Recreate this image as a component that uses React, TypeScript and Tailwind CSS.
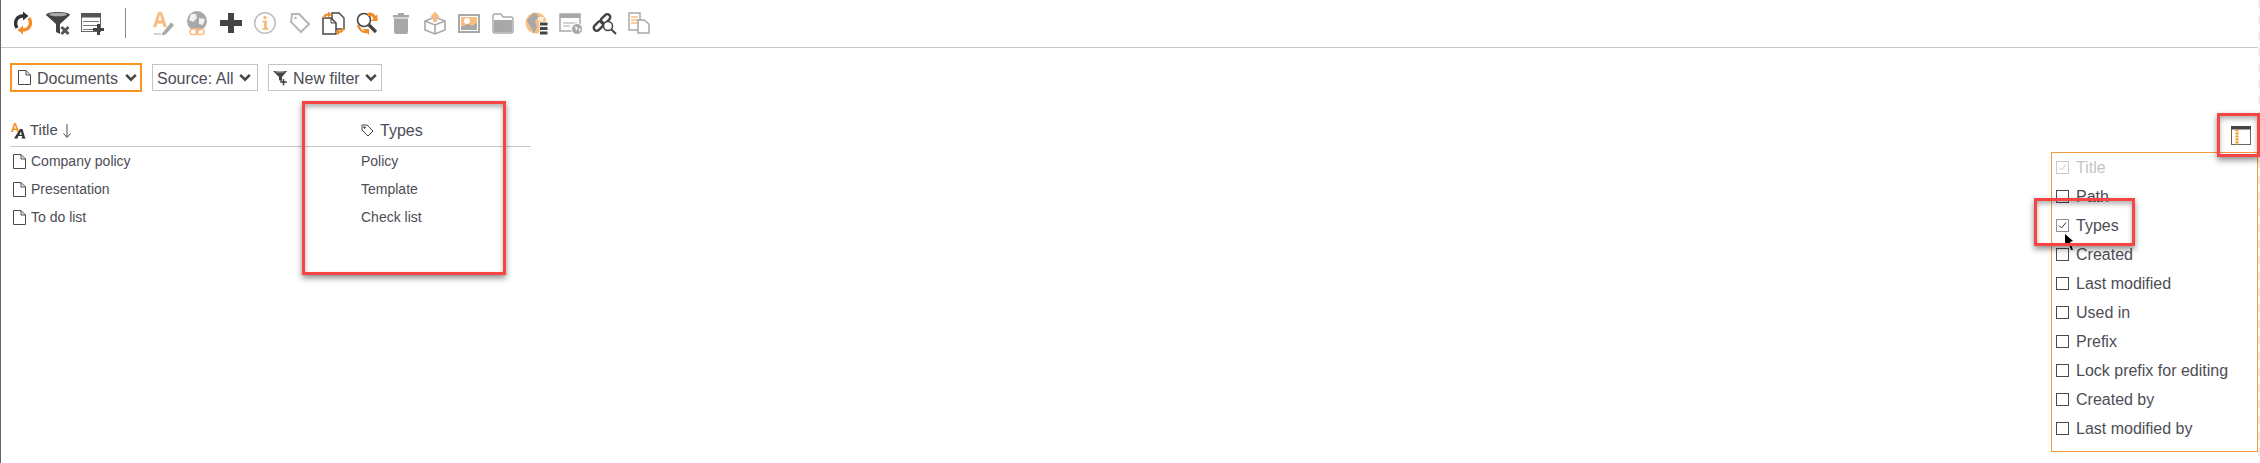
import React from "react";

const Doc = ({ className = "" }: { className?: string }) => (
  <svg width="13" height="15" viewBox="0 0 13 15" className={`shrink-0 ${className}`} fill="none" stroke="#4b4b4b" strokeWidth="1">
    <path d="M.5 .5H8L12.5 5V14.5H.5Z M8 .5V5H12.5" />
  </svg>
);

const G = "#a8a8a8";
const O = "#f9bd82";
const S = "#f28c28";
const D = "#444";

const Tool = ({ children }: { children: React.ReactNode }) => (
  <svg width="26" height="26" viewBox="0 0 26 26" className="shrink-0">{children}</svg>
);

const icons: React.ReactNode[] = [
  <>
    <path fillRule="evenodd" d="M3 17L8 2H12L17 17H13.5L12.6 13.5H7.4L6.5 17ZM8.3 10.5H11.7L10 5Z" fill={O} />
    <path d="M12 23L21 12L24.5 15L15.5 25L11.5 25.5Z" fill={G} stroke="#fff" strokeWidth=".7" />
    <path d="M4 24H11" stroke={G} />
  </>,
  <>
    <circle cx="13" cy="11" r="10" fill={G} />
    <path d="M7 4L12 4L13 8L9 12L5 10ZM15 8L21 9L19 15L15 14Z" fill="#fff" opacity=".85" />
    <rect x="6" y="19" width="8" height="5.5" rx="2.7" fill="#fff" stroke={O} strokeWidth="1.6" />
    <rect x="12" y="19" width="8" height="5.5" rx="2.7" fill="none" stroke={O} strokeWidth="1.6" />
  </>,
  <path d="M10 3H16V10H24V16H16V23H10V16H2V10H10Z" fill={D} />,
  <>
    <circle cx="13" cy="13" r="10.3" fill="#fff" stroke="#bdbdbd" strokeWidth="1.5" />
    <circle cx="13" cy="7.5" r="1.7" fill={O} />
    <path d="M10.5 10.5H15V18H16.5V20H10.5V18H12V12.5H10.5Z" fill={O} />
  </>,
  <>
    <path d="M6 4H13L23 14L15 22L5 12Z" fill="#fff" stroke="#b5b5b5" strokeWidth="2" />
    <circle cx="9.5" cy="8" r="1.3" fill="#b5b5b5" />
  </>,
  <>
    <path d="M12 3H19L24 8V19H12Z" fill="#fff" stroke={D} strokeWidth="1.4" />
    <path d="M3 8H11L16 13V24H3Z" fill="#fff" stroke={D} strokeWidth="1.5" />
    <path d="M11 8V13H16" fill="none" stroke={D} />
    <path d="M3 8C3 5 5 3.5 8 3.5V1.5L12 4.5L8 7.5V5.5C6.5 5.5 5.5 6.5 5.5 8Z" fill={S} />
    <path d="M24 18C24 21 22 23 19 23V25L15 22L19 19V21C20.5 21 21.5 20 21.5 18Z" fill={S} />
  </>,
  <>
    <circle cx="10" cy="10" r="6.5" fill="none" stroke={D} strokeWidth="1.6" />
    <path d="M15 15L22 22" stroke={D} strokeWidth="3.2" />
    <path d="M13 3.5C16 1.5 20 3 21.5 6L23.5 4.5V11H17L19.5 8.5C18 6 16 5.5 14 6.5Z" fill={S} />
    <path d="M3 15C4 20 8 24 13 23L15 25V19H8.5L11 21C8.5 21 6.5 19 5.5 15Z" fill={S} />
  </>,
  <>
    <path d="M5 5H10V3H16V5H21V7.5H5Z" fill={G} />
    <path d="M6 8.5H20V22Q20 24 18 24H8Q6 24 6 22Z" fill={G} />
  </>,
  <>
    <path d="M3 11L13 7L23 11V20L13 24L3 20Z" fill="#fff" stroke={G} strokeWidth="1.6" />
    <path d="M3 11L13 15L23 11M13 15V24" fill="none" stroke={G} strokeWidth="1.6" />
    <path d="M13 1.5L18 7H15V12H11V7H8Z" fill={O} />
  </>,
  <>
    <rect x="3" y="5" width="20" height="17" fill="#fff" stroke={G} strokeWidth="2" />
    <rect x="5" y="7" width="16" height="13" fill={O} />
    <circle cx="11" cy="11" r="3" fill="#fff" />
    <path d="M5 20V17L12 14L16 16L21 13V20Z" fill={G} />
  </>,
  <>
    <path d="M3 6Q3 4 5 4H11L13 7H21Q23 7 23 9V21Q23 23 21 23H5Q3 23 3 21Z" fill="#fff" stroke={G} strokeWidth="1.4" />
    <path d="M4 10H22V21Q22 22 21 22H5Q4 22 4 21Z" fill={G} />
  </>,
  <>
    <circle cx="12" cy="13" r="10.5" fill={O} />
    <path d="M10 2.5L15 6L11 11L13 17L10 23.5L6 16L3 10Z" fill={G} />
    <path d="M14 7H20L19 11H14Z" fill="#fff" opacity=".7" />
    <rect x="15.5" y="12" width="8.5" height="4" rx="1" fill={D} stroke="#fff" />
    <rect x="15.5" y="16.5" width="8.5" height="4" rx="1" fill={D} stroke="#fff" />
    <rect x="15.5" y="21" width="8.5" height="4" rx="1" fill={D} stroke="#fff" />
  </>,
  <>
    <rect x="2" y="4" width="20" height="17" fill="#fff" stroke={G} strokeWidth="1.5" />
    <rect x="2" y="4" width="20" height="4" fill={G} />
    <path d="M5 13H19M5 16H12" stroke={G} />
    <circle cx="19" cy="19" r="5.5" fill={G} stroke="#fff" />
    <path d="M17 16L20 18L18 21ZM21 18L23 19L21 22Z" fill="#fff" />
  </>,
  <>
    <rect x="1" y="13" width="11" height="6" rx="3" transform="rotate(-45 6.5 16)" fill="none" stroke={D} strokeWidth="2.4" />
    <rect x="8" y="6" width="11" height="6" rx="3" transform="rotate(-45 13.5 9)" fill="none" stroke={D} strokeWidth="2.4" />
    <circle cx="16" cy="16" r="4.5" fill="#fff" stroke={D} strokeWidth="1.5" />
    <path d="M19 19L24 24" stroke={D} strokeWidth="2" />
  </>,
  <>
    <rect x="3" y="3" width="11" height="17" fill="#fff" stroke={G} strokeWidth="1.5" />
    <path d="M5 7H12M5 10H12M5 13H12" stroke={O} strokeWidth="1.4" />
    <path d="M12 10H18L23 14V23H12Z" fill="#fff" stroke={G} strokeWidth="1.5" />
  </>,
];

const Check = ({ checked, muted }: { checked?: boolean; muted?: boolean }) => (
  <span className={`flex h-[13px] w-[13px] shrink-0 items-center justify-center border ${muted ? "border-[#c8c8c8]" : checked ? "border-[#8f8f8f]" : "border-[#4b4b4b]"}`}>
    {checked && (
      <svg width="11" height="11" viewBox="0 0 11 11" fill="none" stroke={muted ? "#c8c8c8" : "#333"} strokeWidth="1">
        <path d="M2 5.5L4.5 8L9 2.5" />
      </svg>
    )}
  </span>
);

const cols = ["Title", "Path", "Types", "Created", "Last modified", "Used in", "Prefix", "Lock prefix for editing", "Created by", "Last modified by"];

const Chevron = () => (
  <svg width="12" height="9" viewBox="0 0 12 9" fill="none" stroke="#444" strokeWidth="2.6" className="shrink-0">
    <path d="M1.2 1.8L6 6.6L10.8 1.8" />
  </svg>
);

const shadow = "shadow-[0_3px_6px_rgba(0,0,0,0.45),inset_0_3px_5px_rgba(0,0,0,0.3)]";

export default function App() {
  return (
    <div className="relative h-[463px] w-[2260px] overflow-hidden border-l border-[#666] bg-white font-['Liberation_Sans',Arial,sans-serif] text-[#4d4d55]">
      {/* toolbar */}
      <div className="flex h-[48px] items-start border-b border-[#c8c8c8] pl-[9px] pt-[10px]">
        <div className="flex items-center gap-[8.5px]">
          <Tool>
            <path d="M7 18C3.5 12 7 6 13 6" fill="none" stroke="#333" strokeWidth="3.4" />
            <path d="M13 1.5V10.5L18.5 6Z" fill="#333" />
            <path d="M19 8C22.5 14 19 20 13 20" fill="none" stroke={S} strokeWidth="3.4" />
            <path d="M13 15.5V24.5L7.5 20Z" fill={S} />
          </Tool>
          <Tool>
            <path d="M1 5C1 1 25 1 25 5L15 14V24L11 22V14Z" fill="#444" />
            <ellipse cx="13" cy="4.5" rx="9" ry="1.7" fill="#aaa" />
            <path d="M16.5 17L23.5 24M23.5 17L16.5 24" stroke="#555" strokeWidth="3" />
          </Tool>
          <Tool>
            <rect x="2.5" y="3.5" width="19" height="18" fill="#fff" stroke="#666" />
            <rect x="2" y="3" width="20" height="4.5" fill="#555" />
            <path d="M4 11.5H20M4 15.5H20M4 19.5H14" stroke="#777" />
            <path d="M18 14H21V18H25V21H21V25H18V21H14V18H18Z" fill="#444" />
          </Tool>
        </div>
        <div className="ml-[20px] mr-[24px] mt-[-2px] h-[30px] w-px bg-[#888]" />
        <div className="flex items-center gap-[8px]">
          {icons.map((ic, i) => (
            <Tool key={i}>{ic}</Tool>
          ))}
        </div>
      </div>

      {/* filters */}
      <div className="flex items-center gap-[10px] pl-[9px] pt-[15px] text-[16px] leading-none">
        <div className="flex h-[29px] w-[132px] items-center border-[2px] border-[#f7931e] pl-[6px]">
          <Doc />
          <span className="ml-[6px] pt-[2px]">Documents</span>
          <span className="ml-[7px]"><Chevron /></span>
        </div>
        <div className="flex h-[27px] w-[106px] items-center border border-[#c4c4c4] pl-[4px]">
          <span className="pt-[2px]">Source: All</span>
          <span className="ml-[6px]"><Chevron /></span>
        </div>
        <div className="flex h-[27px] w-[114px] items-center border border-[#c4c4c4] pl-[4px]">
          <svg width="15" height="16" viewBox="0 0 15 16" className="shrink-0">
            <path d="M0 1H14L9 7V12L6 10V7Z" fill="#444" />
            <ellipse cx="7" cy="1.8" rx="5" ry="0.8" fill="#aaa" />
            <path d="M9.5 9H11.5V11H14V13H11.5V15.5H9.5V13H7V11H9.5Z" fill="#444" stroke="#fff" strokeWidth=".4" />
          </svg>
          <span className="ml-[5px] whitespace-nowrap pt-[2px]">New filter</span>
          <span className="ml-[5px]"><Chevron /></span>
        </div>
      </div>

      {/* table */}
      <div className="ml-[9px] mt-[29px] w-[521px]">
        <div className="flex h-[26px] items-center border-b border-[#c8c8c8] pb-[6px] text-[16px]">
          <div className="flex w-[351px] items-center gap-[4px] pl-[1px]">
            <svg width="15" height="16" viewBox="0 0 15 16" className="shrink-0">
              <path fillRule="evenodd" d="M0 9L3 0H5L8 9H6L5.5 7H2.5L2 9ZM3 5.4H5L4 2Z" fill="#f7931e" />
              <path fillRule="evenodd" d="M3 15.5L9 6H11.5L14 14.5L15 15.5H10.5V14.7L11.3 14.3L11 13H7.5L6.5 14.5L7 15.5ZM8.3 11.8H10.7L10 8.5Z" fill="#333" />
            </svg>
            <span className="text-[15px]">Title</span>
            <svg width="10" height="16" viewBox="0 0 10 16" fill="none" stroke="#4d4d55" className="shrink-0">
              <path d="M5 1V14M1.5 10.5L5 14.5L8.5 10.5" />
            </svg>
          </div>
          <div className="flex items-center gap-[6px]">
            <svg width="13" height="13" viewBox="0 0 13 13" fill="none" stroke="#444" className="shrink-0">
              <path d="M1 1H6L12 7L7 12L1 6Z" />
              <circle cx="3.5" cy="3.5" r="0.8" fill="#444" />
            </svg>
            <span>Types</span>
          </div>
        </div>
        {[["Company policy", "Policy"], ["Presentation", "Template"], ["To do list", "Check list"]].map(([a, b]) => (
          <div key={a} className="flex h-[28px] items-center text-[14px]">
            <div className="flex w-[351px] items-center gap-[5px] pl-[3px]">
              <Doc />
              <span>{a}</span>
            </div>
            <span>{b}</span>
          </div>
        ))}
      </div>

      {/* column settings */}
      <div className="absolute left-[2225px] top-[121px] flex h-[30px] w-[30px] items-center justify-center">
        <svg width="20" height="20" viewBox="0 0 20 20">
          <rect x=".5" y=".5" width="19" height="18" fill="#fff" stroke="#666" />
          <rect x="0" y="0" width="20" height="3.5" fill="#444" />
          <path d="M6 3.5V19" stroke="#f7931e" strokeWidth="3" strokeDasharray="2 1" />
        </svg>
      </div>

      <div className="absolute left-[2050px] top-[152px] h-[300px] w-[207px] border border-[#f59a3e] bg-white pl-[4px] text-[16px]">
        {cols.map((c, i) => (
          <div key={c} className={`flex h-[29px] items-center gap-[7px] ${i === 0 ? "text-[#c4c4c4]" : ""}`}>
            <Check checked={i === 0 || i === 2} muted={i === 0} />
            <span className="pt-[1px] leading-none">{c}</span>
          </div>
        ))}
      </div>

      {/* cursor */}
      <svg className="absolute left-[2064px] top-[234px]" width="12" height="18" viewBox="0 0 12 18">
        <path d="M0 0L8 7L5 8L8 16L6 16L3.5 9L0 11Z" fill="#000" />
      </svg>

      {/* right-edge stripes and left-edge mark */}
      <div className="absolute right-0 top-0 h-full w-[2px] bg-[repeating-linear-gradient(180deg,#ececec_0,#ececec_8px,#ffffff_8px,#ffffff_16px)]" />
      <div className="absolute -left-px top-[229px] h-[8px] w-px bg-black" />

      {/* red callouts */}
      <div className={`absolute left-[301px] top-[101px] h-[174px] w-[204px] border-[3px] border-[#f74545] ${shadow}`} />
      <div className={`absolute left-[2216px] top-[113px] h-[44px] w-[43px] border-[3px] border-[#f74545] ${shadow}`} />
      <div className={`absolute left-[2033px] top-[198px] h-[48px] w-[101px] border-[3px] border-[#f74545] ${shadow}`} />
    </div>
  );
}
